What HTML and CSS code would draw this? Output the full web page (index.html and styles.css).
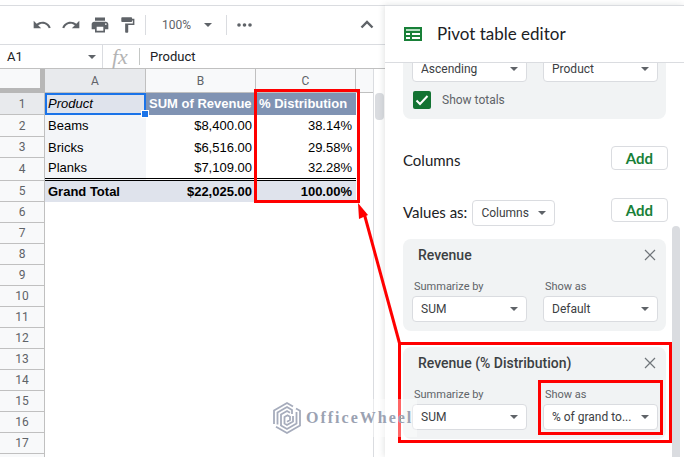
FILE: index.html
```
<!DOCTYPE html>
<html lang="en">
<head>
<meta charset="utf-8">
<title>Pivot table editor</title>
<link rel="stylesheet" href="styles.css">
</head>
<body>
<div class="app">
  <main class="sheet">
    <div class="toolbar">
      <button class="tool" aria-label="Undo"><svg viewBox="0 0 24 24"><path d="M12.5 8c-2.65 0-5.05.99-6.9 2.6L2 7v9h9l-3.62-3.62c1.39-1.16 3.16-1.88 5.12-1.88 3.54 0 6.55 2.31 7.6 5.5l2.37-.78C21.08 11.03 17.15 8 12.5 8z"/></svg></button>
      <button class="tool" aria-label="Redo"><svg viewBox="0 0 24 24"><path d="M18.4 10.6C16.55 8.99 14.15 8 11.5 8c-4.65 0-8.58 3.03-9.96 7.22L3.9 16c1.05-3.19 4.05-5.5 7.6-5.5 1.95 0 3.73.72 5.12 1.88L13 16h9V7l-3.6 3.6z"/></svg></button>
      <button class="tool" aria-label="Print"><svg viewBox="0 0 24 24"><path d="M19 8H5c-1.66 0-3 1.34-3 3v6h4v4h12v-4h4v-6c0-1.66-1.34-3-3-3zm-3 11H8v-5h8v5zm3-7c-.55 0-1-.45-1-1s.45-1 1-1 1 .45 1 1-.45 1-1 1zm-1-9H6v4h12V3z"/></svg></button>
      <button class="tool" aria-label="Paint format"><svg viewBox="1 -1 26 26"><path d="M18 4V3c0-.55-.45-1-1-1H5c-.55 0-1 .45-1 1v4c0 .55.45 1 1 1h12c.55 0 1-.45 1-1V6h1v4H9v11c0 .55.45 1 1 1h2c.55 0 1-.45 1-1v-9h8V4h-3z"/></svg></button>
      <span class="divider"></span>
      <button class="zoom">100%<span class="caret"></span></button>
      <span class="divider"></span>
      <button class="tool more" aria-label="More"><svg viewBox="0 0 20 20"><circle cx="4" cy="10" r="1.8"/><circle cx="9.500" cy="10" r="1.8"/><circle cx="15" cy="10" r="1.8"/></svg></button>
      <button class="tool collapse" aria-label="Hide menus"><svg viewBox="0 0 20 20"><path d="M4.500 12.500 10 7l5.500 5.500" fill="none" stroke="#5f6368" stroke-width="2.400"/></svg></button>
    </div>
    <div class="formula">
      <button class="namebox">A1<span class="caret"></span></button>
      <span class="fx">fx</span>
      <input class="formula-input" aria-label="Formula" value="Product">
    </div>
    <div class="grid">
      <div class="cells">
        <table>
          <colgroup><col class="c-row"><col class="c-a"><col class="c-b"><col class="c-c"><col></colgroup>
          <thead>
            <tr><th class="corner"></th><th class="on">A</th><th>B</th><th>C</th><th></th></tr>
          </thead>
          <tbody>
            <tr class="tall heading"><th class="on">1</th><td class="active">Product<span class="handle"></span></td><td>SUM of Revenue</td><td>% Distribution</td><td class="rest"></td></tr>
            <tr class="tall"><th>2</th><td class="name">Beams</td><td class="num">$8,400.00</td><td class="num">38.14%</td><td></td></tr>
            <tr><th>3</th><td class="name">Bricks</td><td class="num">$6,516.00</td><td class="num">29.58%</td><td></td></tr>
            <tr class="last"><th>4</th><td class="name">Planks</td><td class="num">$7,109.00</td><td class="num">32.28%</td><td class="rest"></td></tr>
            <tr class="total"><th>5</th><td>Grand Total</td><td class="num">$22,025.00</td><td class="num">100.00%</td><td class="rest"></td></tr>
            <tr><th>6</th><td colspan="4"></td></tr>
            <tr><th>7</th><td colspan="4"></td></tr>
            <tr><th>8</th><td colspan="4"></td></tr>
            <tr><th>9</th><td colspan="4"></td></tr>
            <tr><th>10</th><td colspan="4"></td></tr>
            <tr><th>11</th><td colspan="4"></td></tr>
            <tr><th>12</th><td colspan="4"></td></tr>
            <tr><th>13</th><td colspan="4"></td></tr>
            <tr><th>14</th><td colspan="4"></td></tr>
            <tr><th>15</th><td colspan="4"></td></tr>
            <tr><th>16</th><td colspan="4"></td></tr>
            <tr><th>17</th><td colspan="4"></td></tr>
            <tr><th></th><td colspan="4"></td></tr>
          </tbody>
        </table>
        <span class="mark mark-column"></span>
      </div>
      <div class="rail"><span class="rail-thumb"></span></div>
    </div>
  </main>

  <aside class="panel">
    <header class="panel-head">
      <svg class="pivot" viewBox="0 0 18 14"><path fill="#188038" d="M0 0h18v14H0z"/><path fill="#b7dfc3" d="M2 2h14v2H2z"/><path fill="#fff" d="M2 6h4v2H2zM8 6h8v2H8zM2 10h4v2H2zM8 10h8v2H8z"/></svg>
      <h1>Pivot table editor</h1>
    </header>
    <div class="panel-body">
      <div class="content">
        <section class="card clipped">
          <div class="fields">
            <span class="select"><select aria-label="Order"><option>Ascending</option></select></span>
            <span class="select"><select aria-label="Sort by"><option>Product</option></select></span>
          </div>
          <label class="check"><input type="checkbox" checked><svg viewBox="0 0 18 18"><path d="M3.500 9.500 7 13l7.500-8" fill="none" stroke="#fff" stroke-width="2"/></svg>Show totals</label>
        </section>
        <div class="section columns"><h2>Columns</h2><button class="add">Add</button></div>
        <div class="section values"><h2><label for="values-as">Values as:</label></h2><span class="select compact"><select id="values-as"><option>Columns</option></select></span><button class="add">Add</button></div>
        <section class="card value">
          <div class="card-head"><h3>Revenue</h3><button class="close" aria-label="Remove"><svg viewBox="0 0 12 12"><path d="M1 1l10 10M11 1 1 11" fill="none" stroke="#70757a" stroke-width="1.200"/></svg></button></div>
          <div class="fields">
            <label class="field">Summarize by<span class="select"><select><option>SUM</option></select></span></label>
            <label class="field">Show as<span class="select"><select><option>Default</option></select></span></label>
          </div>
        </section>
        <section class="card value">
          <div class="card-head"><h3>Revenue (% Distribution)</h3><button class="close" aria-label="Remove"><svg viewBox="0 0 12 12"><path d="M1 1l10 10M11 1 1 11" fill="none" stroke="#70757a" stroke-width="1.200"/></svg></button></div>
          <div class="fields">
            <label class="field">Summarize by<span class="select"><select><option>SUM</option></select></span></label>
            <label class="field">Show as<span class="select"><select><option>% of grand to...</option></select></span><span class="mark mark-field"></span></label>
          </div>
          <span class="mark mark-card"></span>
        </section>
      </div>
      <span class="panel-thumb"></span>
    </div>
  </aside>

  <svg class="arrow" viewBox="0 0 46 144"><path d="M6 10 42 142" stroke="#f00" stroke-width="3"/><path d="M0 0 10 12 1 16z" fill="#f00"/></svg>

  <div class="watermark">
    <svg viewBox="0 0 30 34" fill="none" stroke="#a6acbc" stroke-width="1.800"><path d="M2 23V9.500L15 2l6 3.500"/><path d="M5.500 23.500V11.500L15 6l5 3v4"/><path d="M9 25v-11.500L15 10l3 1.800"/><path d="M24 7.500l4 2.300V24.500L15 32 4 25.700"/><path d="M24.500 11v11.500L15 28l-6-3.500"/><path d="M21 15v5.500L15 24l-2.500-1.500V16l3-1.800 2.500 1.500v3.300l-3 1.800"/></svg>
    <span>OfficeWheel</span>
  </div>
</div>
</body>
</html>
```
FILE: styles.css
```
* { box-sizing: border-box; }

body {
  margin: 0;
  background: #fff;
  font-family: Roboto, "Liberation Sans", sans-serif;
  font-size: 13px;
  color: #202124;
}

button, input, select { font: inherit; color: inherit; }
button { border: 0; padding: 0; background: none; }
h1, h2, h3 { margin: 0; font-weight: 400; }

.app {
  position: relative;
  display: flex;
  height: 100vh;
  padding-top: 5px;
  overflow: hidden;
}

.sheet {
  flex: 1;
  min-width: 0;
  display: flex;
  flex-direction: column;
  border-top: 1px solid #dadce0;
}

.toolbar {
  display: flex;
  align-items: center;
  gap: 9px;
  height: 39px;
  padding: 0 8px 0 32px;
  border-bottom: 1px solid #dadce0;
}
.tool { width: 20px; height: 20px; }
.tool svg { display: block; width: 20px; height: 20px; fill: #5f6368; }
.divider { width: 1px; height: 20px; margin-left: -3px; background: #dadce0; }
.zoom {
  display: flex;
  align-items: center;
  justify-content: space-between;
  width: 50px;
  margin: 0 8px 0 7px;
  font-size: 12px;
  color: #5f6368;
}
.more { margin-left: -1px; }
.collapse { margin-left: auto; }

.caret {
  border: 4px solid transparent;
  border-top-color: #5f6368;
  border-bottom: 0;
}

.formula {
  display: flex;
  align-items: center;
  height: 24px;
  border-bottom: 1px solid #c0c0c0;
}
.namebox {
  display: flex;
  align-items: center;
  justify-content: space-between;
  width: 103px;
  height: 23px;
  padding: 0 6px 0 7px;
  border-right: 1px solid #dadce0;
}
.fx {
  width: 37px;
  padding-left: 9px;
  border-right: 1px solid #c4c7c5;
  font: italic 22px/17px "Liberation Serif", serif;
  color: #b4b4b4;
}
.formula-input {
  flex: 1;
  min-width: 0;
  border: 0;
  padding: 0 10px;
  outline: 0;
}

.grid { flex: 1; min-height: 0; display: flex; }
.cells { position: relative; flex: 1; min-width: 0; overflow: hidden; }
.rail { width: 12px; padding: 24px 1px 0; border-left: 1px solid #dadce0; }
.rail-thumb { display: block; height: 27px; border-radius: 4px; background: #dadce0; }

table {
  width: 100%;
  table-layout: fixed;
  border-collapse: separate;
  border-spacing: 0;
  font-family: "Liberation Sans", Arial, sans-serif;
  color: #000;
}
.c-row { width: 45px; }
.c-a { width: 101px; }
.c-b { width: 110px; }
.c-c { width: 100px; }
th {
  padding: 0;
  border-right: 1px solid #c0c0c0;
  border-bottom: 1px solid #c0c0c0;
  background: #f8f9fa;
  font: 12px/16px Roboto, sans-serif;
  color: #5f6368;
}
thead th { height: 24px; }
thead th:last-child { border-right: 0; }
th.on { background: #e8eaed; }
.corner { border-right: 5px solid #b7b7b7; border-bottom: 5px solid #b7b7b7; }
td { position: relative; padding: 0 4px 0 3px; line-height: 16px; white-space: nowrap; }
tbody tr { height: 21px; }
tbody .tall { height: 22px; }
tbody .last { height: 23px; }
.heading td { background: #8093b3; color: #fff; font-weight: 700; }
.heading .active {
  padding: 0 1px;
  border: 2px solid #1a73e8;
  background: #dfe3ec;
  color: #000;
  font-style: italic;
  font-weight: 400;
  line-height: 14px;
}
.handle {
  position: absolute;
  right: -5px;
  bottom: -5px;
  z-index: 1;
  width: 8px;
  height: 8px;
  border: 1px solid #fff;
  background: #1a73e8;
}
.name { background: #f3f5f8; }
.num { text-align: right; }
.last td { border-bottom: 3px double #000; }
.total td { background: #dfe3ec; font-weight: 700; }
.heading td.rest, .last td.rest, .total td.rest { border: 0; background: #fff; }

.panel {
  display: flex;
  flex-direction: column;
  width: 299px;
  border-top: 1px solid #dadce0;
  box-shadow: -1px 0 6px rgba(60, 64, 67, 0.15);
  background: #fff;
}
.panel-head {
  display: flex;
  align-items: center;
  gap: 15px;
  height: 57px;
  padding-left: 19px;
  border-bottom: 1px solid #dadce0;
}
.pivot { width: 18px; height: 14px; }
h1 { font: 17px/24px Lato, sans-serif; }
.panel-body {
  flex: 1;
  min-height: 0;
  display: flex;
  justify-content: space-between;
  padding: 0 4px 0 18px;
  overflow: hidden;
}
.content { width: 265px; }
.panel-thumb { width: 8px; margin-top: 163px; border-radius: 4px 4px 0 0; background: #dadce0; }

.card {
  position: relative;
  width: 263px;
  padding: 8px 9px;
  border-radius: 8px;
  background: #f1f3f4;
}
.clipped { margin-top: -15px; padding-bottom: 10px; }
.fields { display: grid; grid-template-columns: 115px 115px; gap: 16px; }
.select { position: relative; display: block; }
.select::after {
  content: "";
  position: absolute;
  top: 11px;
  right: 9px;
  border: 4px solid transparent;
  border-top-color: #5f6368;
  border-bottom: 0;
  pointer-events: none;
}
select {
  display: block;
  width: 100%;
  height: 26px;
  padding: 0 8px;
  border: 1px solid #dadce0;
  border-radius: 4px;
  background: #fff;
  font-size: 12px;
  color: #3c4043;
  appearance: none;
}
.check {
  position: relative;
  display: flex;
  align-items: center;
  gap: 11px;
  margin: 9px 0 0 1px;
  font-size: 12px;
  color: #5f6368;
}
.check input {
  width: 18px;
  height: 18px;
  margin: 0;
  border-radius: 2px;
  background: #137333;
  appearance: none;
}
.check svg { position: absolute; left: 0; width: 18px; height: 18px; pointer-events: none; }

.section { display: flex; align-items: center; height: 28px; }
.columns { margin-top: 27px; }
.values { margin-top: 24px; }
h2 { font: 15px/20px Lato, sans-serif; }
.compact { align-self: flex-end; width: 83px; margin-left: 5px; }
.add {
  align-self: flex-start;
  width: 57px;
  height: 24px;
  margin-left: auto;
  border: 1px solid #dadce0;
  border-radius: 4px;
  font: 700 15px/20px Lato, sans-serif;
  color: #188038;
}

.value { height: 92px; margin-top: 16px; }
.values + .value { margin-top: 13px; }
.card-head {
  display: flex;
  align-items: center;
  justify-content: space-between;
  height: 16px;
  padding: 0 1px 0 6px;
}
h3 { font-size: 14px; font-weight: 500; color: #3c4043; }
.close { width: 12px; height: 12px; }
.close svg { display: block; }
.value .fields { margin-top: 16px; }
.field { position: relative; font-size: 11px; line-height: 16px; color: #5f6368; text-indent: 2px; }
.field .select { margin-top: 1px; text-indent: 0; }

.mark { position: absolute; border: 3px solid #f00; pointer-events: none; }
.mark-column { top: 20px; left: 254px; width: 106px; height: 114px; }
.mark-card { inset: -5px -6px -4px -5px; }
.mark-field { inset: -7px -5px -5px -5px; }

.arrow {
  position: absolute;
  top: 203px;
  left: 358px;
  width: 46px;
  height: 144px;
  pointer-events: none;
}

.watermark {
  position: absolute;
  top: 399px;
  left: 267px;
  display: flex;
  align-items: center;
  gap: 4px;
  width: 150px;
  height: 38px;
  padding-left: 5px;
  background: rgba(255, 255, 255, 0.4);
  font: 700 16px/20px "Liberation Serif", serif;
  letter-spacing: 2px;
  color: #9ba2b2;
  pointer-events: none;
}
.watermark svg { flex: none; width: 30px; height: 34px; }
```
